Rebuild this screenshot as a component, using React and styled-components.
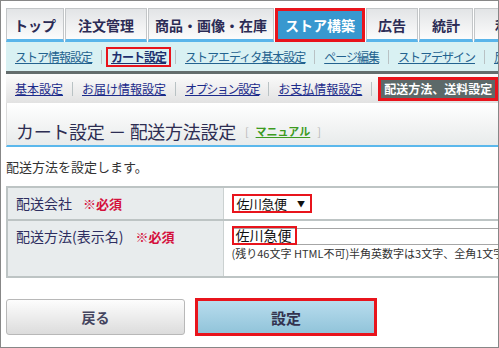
import styled, { createGlobalStyle, css } from "styled-components";

const GlobalStyle = createGlobalStyle`
  html, body {
    margin: 0;
    padding: 0;
    background: #fff;
  }
  body {
    font-family: "Noto Sans CJK JP", "Noto Sans", sans-serif;
  }
`;

const Frame = styled.div`
  width: 499px;
  height: 348px;
  box-sizing: border-box;
  border: 1px solid #878787;
  padding: 7px 0 0 5px;
  overflow: hidden;
  background: #fff;
`;

const Content = styled.div`
  width: 560px;
`;

const TabBar = styled.nav`
  display: flex;
  gap: 1px;
  height: 34px;
`;

const Tab = styled.div`
  box-sizing: border-box;
  flex: none;
  width: ${(p) => p.$w}px;
  display: flex;
  align-items: center;
  justify-content: center;
  padding-top: 2px;
  font-size: 14px;
  line-height: 18px;
  font-weight: bold;
  color: #2b2b55;
  background: linear-gradient(#e2e4e6, #fcfcfc);
  border: 1px solid #c3c6c8;
  border-bottom: 3px solid #5ab5ea;
  white-space: nowrap;

  ${(p) =>
    p.$active &&
    css`
      background: #3898cf;
      color: #fff;
      border: 3px solid #e8141c;
      padding-top: 0;
    `}
`;

const StoreNav = styled.div`
  height: 29px;
  display: flex;
  align-items: center;
  padding-left: 9px;
  background: #d9f1f3;
  border-bottom: 3px solid #646d6d;
  font-size: 12px;
  line-height: 14px;
  letter-spacing: -1px;
  white-space: nowrap;
`;

const StoreLink = styled.a`
  color: #23628f;
  text-decoration: underline;

  ${(p) =>
    p.$active &&
    css`
      color: #1c2f6e;
      font-weight: bold;
      border: 2px solid #e8141c;
      padding: 1px 3px;
      margin: 0 -5px;
    `}
`;

const CartNav = styled.div`
  height: 29px;
  display: flex;
  align-items: center;
  padding-left: 9px;
  background: linear-gradient(#fbfbfb, #e2e2e2);
  font-size: 12px;
  line-height: 14px;
  white-space: nowrap;
`;

const CartLink = styled.a`
  color: #1b2a8a;
  text-decoration: underline;
  letter-spacing: ${(p) => (p.$tight ? "-1.4px" : "0")};

  ${(p) =>
    p.$active &&
    css`
      color: #fff;
      font-weight: bold;
      text-decoration: none;
      background: #5c6969;
      border: 3px solid #e8141c;
      padding: 2px 3px;
      margin-left: -3px;
    `}
`;

const Sep = styled.span`
  flex: none;
  width: 1px;
  height: 14px;
  margin: 0 9px;
  background: #b9c2c4;
`;

const TitleBar = styled.div`
  box-sizing: border-box;
  height: 44px;
  display: flex;
  align-items: center;
  padding: 14px 0 0 9px;
  background: linear-gradient(#ffffff, #e8ebeb);
  border-left: 1px solid #dcdcdc;
  border-bottom: 2px solid #5bb8ec;
`;

const Title = styled.h1`
  margin: 0;
  font-size: 18px;
  line-height: 24px;
  font-weight: normal;
  color: #2d2d52;
  letter-spacing: -0.3px;
`;

const Manual = styled.span`
  margin-left: 9px;
  font-size: 11px;
  color: #b8b8b8;

  a {
    margin: 0 7px;
    color: #3d9b1f;
    font-weight: bold;
    text-decoration: underline;
  }
`;

const Desc = styled.p`
  margin: 10px 0 9px;
  font-size: 13px;
  line-height: 20px;
  color: #333;
`;

const FormTable = styled.table`
  width: 100%;
  table-layout: fixed;
  border-collapse: collapse;
  border: 2px solid #bdc4c4;
`;

const LabelCol = styled.col`
  width: 216px;
`;

const Row = styled.tr`
  border-bottom: 2px solid #bdc4c4;
`;

const Label = styled.th`
  padding: 7px 8px;
  vertical-align: top;
  text-align: left;
  background: #e8eced;
  border-right: 1px solid #cbd1d1;
  font-size: 14px;
  line-height: 17px;
  font-weight: normal;
  color: #2e2e60;
  white-space: nowrap;
`;

const Required = styled.span`
  margin-left: ${(p) => p.$gap}px;
  font-size: 13px;
  font-weight: bold;
  color: #d4103c;
`;

const Field = styled.td`
  padding: 6px 8px ${(p) => p.$bottom}px;
  vertical-align: top;
  background: #fff;
`;

const SelectBox = styled.div`
  box-sizing: border-box;
  width: 80px;
  height: 19px;
  display: flex;
  align-items: center;
  justify-content: space-between;
  padding: 0 5px 0 3px;
  border: 2px solid #e8141c;
  font-size: 13px;
  line-height: 15px;
  letter-spacing: -0.5px;
  color: #111;

  span {
    font-size: 8px;
  }
`;

const InputField = styled.div`
  box-sizing: border-box;
  height: 17px;
  margin-top: 1px;
  display: flex;
  border: 1px solid #a6a6a6;
  border-right: none;
`;

const Marked = styled.div`
  box-sizing: border-box;
  flex: none;
  width: 65px;
  height: 19px;
  margin: -3px 0 -2px -1px;
  padding-left: 2px;
  display: flex;
  align-items: center;
  border: 2px solid #e8141c;
  font-size: 14px;
  line-height: 15px;
  color: #111;
`;

const Help = styled.div`
  margin-top: 1px;
  font-size: 11px;
  line-height: 14px;
  color: #333;
  white-space: nowrap;
`;

const Buttons = styled.div`
  display: flex;
  align-items: center;
  gap: 10px;
  margin-top: 20px;
`;

const BackButton = styled.button`
  box-sizing: border-box;
  width: 179px;
  height: 36px;
  border: 1px solid #b8b8b8;
  border-radius: 3px;
  background: linear-gradient(#fdfdfd, #dcdcdc);
  font-family: inherit;
  font-size: 14px;
  font-weight: bold;
  color: #44445e;
`;

const SubmitButton = styled.button`
  box-sizing: border-box;
  width: 182px;
  height: 38px;
  border: 3px solid #e8141c;
  background: linear-gradient(#b8dced, #91c4da);
  font-family: inherit;
  font-size: 15px;
  font-weight: bold;
  color: #33334f;
`;

const tabs = [
  { label: "トップ", w: 58 },
  { label: "注文管理", w: 82 },
  { label: "商品・画像・在庫", w: 126 },
  { label: "ストア構築", w: 90, active: true },
  { label: "広告", w: 52 },
  { label: "統計", w: 54 },
  { label: "利用", w: 70 },
];

const storeLinks = [
  "ストア情報設定",
  "カート設定",
  "ストアエディタ基本設定",
  "ページ編集",
  "ストアデザイン",
  "反映",
];

const cartLinks = [
  { label: "基本設定" },
  { label: "お届け情報設定" },
  { label: "オプション設定", tight: true },
  { label: "お支払情報設定" },
  { label: "配送方法、送料設定", active: true },
];

export default function App() {
  return (
    <>
      <GlobalStyle />
      <Frame>
        <Content>
          <TabBar>
            {tabs.map((t) => (
              <Tab key={t.label} $w={t.w} $active={t.active}>
                {t.label}
              </Tab>
            ))}
          </TabBar>

          <StoreNav>
            {storeLinks.map((l, i) => (
              <span key={l} style={{ display: "contents" }}>
                {i > 0 && <Sep />}
                <StoreLink $active={l === "カート設定"}>{l}</StoreLink>
              </span>
            ))}
          </StoreNav>

          <CartNav>
            {cartLinks.map((l, i) => (
              <span key={l.label} style={{ display: "contents" }}>
                {i > 0 && <Sep />}
                <CartLink $tight={l.tight} $active={l.active}>
                  {l.label}
                </CartLink>
              </span>
            ))}
          </CartNav>

          <TitleBar>
            <Title>カート設定 － 配送方法設定</Title>
            <Manual>
              [<a>マニュアル</a>]
            </Manual>
          </TitleBar>

          <Desc>配送方法を設定します。</Desc>

          <FormTable>
            <colgroup>
              <LabelCol />
              <col />
            </colgroup>
            <tbody>
              <Row>
                <Label>
                  配送会社<Required $gap={11}>※必須</Required>
                </Label>
                <Field $bottom={6}>
                  <SelectBox>
                    佐川急便<span>▼</span>
                  </SelectBox>
                </Field>
              </Row>
              <Row>
                <Label>
                  配送方法(表示名)<Required $gap={12}>※必須</Required>
                </Label>
                <Field $bottom={16}>
                  <InputField>
                    <Marked>佐川急便</Marked>
                  </InputField>
                  <Help>
                    (残り46文字 HTML不可)半角英数字は3文字、全角1文字として数えます
                  </Help>
                </Field>
              </Row>
            </tbody>
          </FormTable>

          <Buttons>
            <BackButton>戻る</BackButton>
            <SubmitButton>設定</SubmitButton>
          </Buttons>
        </Content>
      </Frame>
    </>
  );
}
